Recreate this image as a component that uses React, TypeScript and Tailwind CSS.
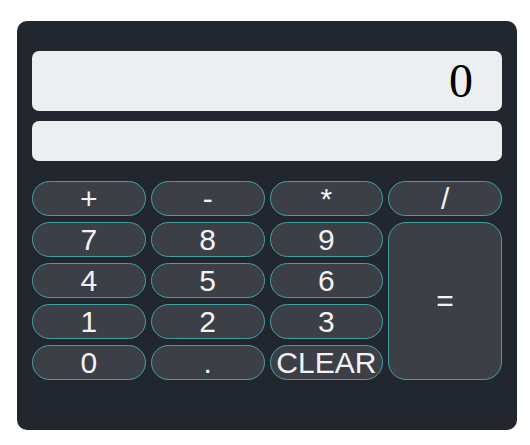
const keys: { label: string; cls?: string }[] = [
  { label: '+' },
  { label: '-' },
  { label: '*' },
  { label: '/' },
  { label: '7' },
  { label: '8' },
  { label: '9' },
  { label: '=', cls: 'row-span-4 rounded-[18px]' },
  { label: '4' },
  { label: '5' },
  { label: '6' },
  { label: '1' },
  { label: '2' },
  { label: '3' },
  { label: '0' },
  { label: '.' },
  { label: 'CLEAR' },
];

export default function App() {
  return (
    <div className="min-h-screen bg-white pl-[17px] pt-[21px]">
      <div className="w-[500px] h-[409px] rounded-[10px] bg-[#22272f] px-[15px] pt-[30px]">
        <div className="h-[60px] rounded-[7px] bg-[#eceff1] flex items-center justify-end pr-[29px] text-[48px] leading-none text-black font-['Liberation_Serif',serif]">
          0
        </div>
        <div className="mt-[10px] h-[40px] rounded-[7px] bg-[#eceff1]" />
        <div className="mt-[20px] grid grid-cols-4 grid-rows-[repeat(5,35px)] gap-x-[5px] gap-y-[6px]">
          {keys.map(k => (
            <button
              key={k.label}
              className={`flex items-center justify-center border border-[#41a3a1] bg-[#3d3f46] text-[#f2f2f2] text-[30px] leading-none font-['Liberation_Sans',Arial,sans-serif] ${k.cls ?? 'rounded-full'}`}
            >
              {k.label}
            </button>
          ))}
        </div>
      </div>
    </div>
  );
}
